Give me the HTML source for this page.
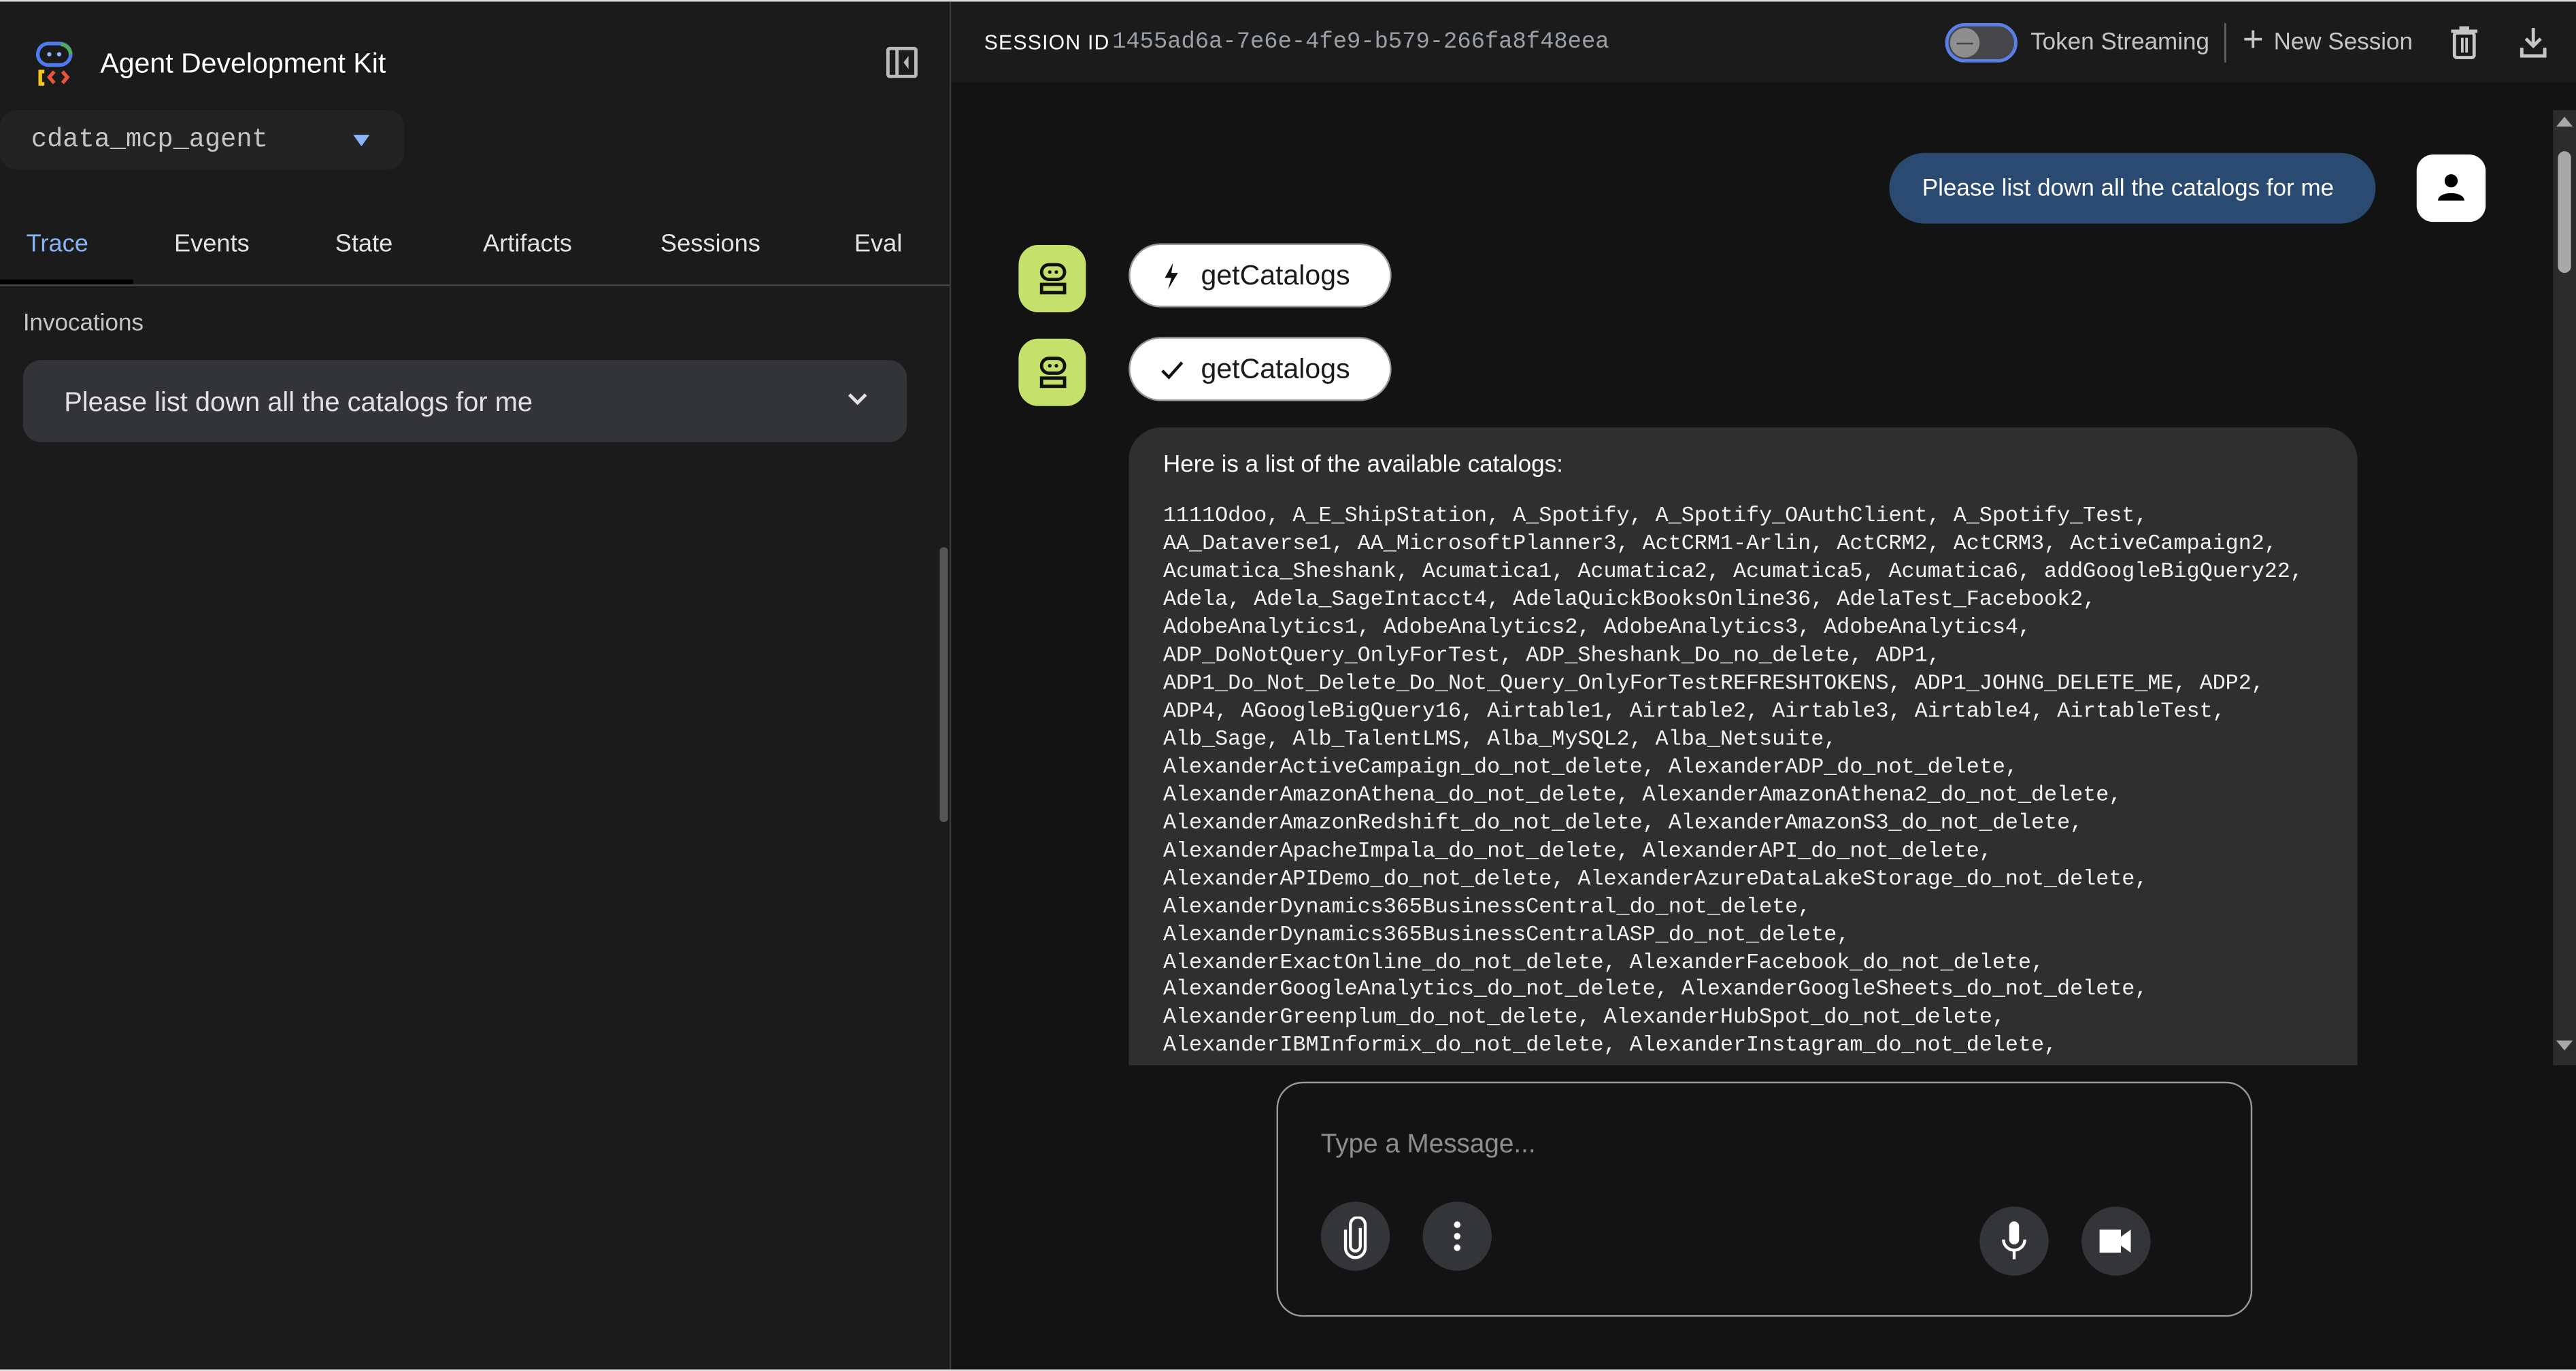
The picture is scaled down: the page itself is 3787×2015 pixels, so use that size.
<!DOCTYPE html>
<html><head><meta charset="utf-8"><style>
html,body{margin:0;padding:0;background:#131313;overflow:hidden;width:3787px;height:2015px}
#s{position:absolute;left:0;top:0;width:1568px;height:834px;transform:scale(2.41518,2.4161);transform-origin:0 0;font-family:"Liberation Sans",Arial,sans-serif;color:#e3e3e3}
.side{position:absolute;left:0;top:0;width:578px;height:834px;background:#1b1b1b;border-right:1px solid #3a3a3a}
.main{position:absolute;left:579px;top:0;width:989px;height:834px;background:#131313}
.hdr{position:absolute;left:0;top:0;width:989px;height:50px;background:#1b1b1b}
.abs{position:absolute}
.tab{position:absolute;top:140px;font-size:15px;color:#e3e3e3}
.mono{font-family:"Liberation Mono",monospace}
.avatar{position:absolute;left:41px;width:41px;height:41px;border-radius:12px;background:#c5e16b}
.pill{position:absolute;left:108px;width:160px;height:39px;border-radius:20px;background:#fff;border:1px solid #999;color:#1a1a1a;font-size:17px;box-sizing:border-box}
.btn{position:absolute;width:42px;height:42px;border-radius:50%;background:#343538}
pre{margin:0;font-family:"Liberation Mono",monospace;font-size:13.15px;line-height:16.97px;color:#f2f2f2}
</style></head><body><div id="s">
<div class="side">
 <svg class="abs" style="left:20px;top:25px" width="28" height="28" viewBox="0 0 28 28">
  <rect x="3" y="1.5" width="20" height="13" rx="6.5" fill="none" stroke="#4f7bf0" stroke-width="2.2"/>
  <path d="M17 2 A6.5 6.5 0 0 1 23 8" stroke="#4caf50" stroke-width="2.2" fill="none"/>
  <circle cx="10" cy="8" r="1.3" fill="#8ab4f8"/><circle cx="16" cy="8" r="1.3" fill="#8ab4f8"/>
  <path d="M7 18.5 H4.5 V26 H7" stroke="#f5c518" stroke-width="2.2" fill="none"/>
  <path d="M13 18.5 L10 22 L13 25.5" stroke="#e8533f" stroke-width="2.2" fill="none"/>
  <path d="M18 18.5 L21 22 L18 25.5" stroke="#e8533f" stroke-width="2.2" fill="none"/>
 </svg>
 <div class="abs" style="left:61px;top:29px;font-size:17px;color:#fff">Agent Development Kit</div>
 <svg class="abs" style="left:539px;top:28px" width="20" height="20" viewBox="0 0 20 20"><rect x="1.5" y="1.5" width="17" height="17" rx="1" fill="none" stroke="#bbb" stroke-width="2"/><line x1="7" y1="2" x2="7" y2="18" stroke="#bbb" stroke-width="2"/><path d="M14 6 L11 10 L14 14Z" fill="#bbb"/></svg>
 <div class="abs" style="left:0;top:67px;width:246px;height:36px;border-radius:10px;background:#232323"></div>
 <div class="abs mono" style="left:19px;top:76px;font-size:16px;color:#c4c7c5">cdata_mcp_agent</div>
 <div class="abs" style="left:215px;top:82px;width:0;height:0;border-left:5px solid transparent;border-right:5px solid transparent;border-top:7px solid #8ab4f8"></div>
 <div class="tab" style="left:16px;color:#8ab4f8">Trace</div>
 <div class="tab" style="left:106px">Events</div>
 <div class="tab" style="left:204px">State</div>
 <div class="tab" style="left:294px">Artifacts</div>
 <div class="tab" style="left:402px">Sessions</div>
 <div class="tab" style="left:520px">Eval</div>
 <div class="abs" style="left:0;top:170px;width:81px;height:3px;background:#000"></div>
 <div class="abs" style="left:0;top:173px;width:578px;height:1px;background:#444"></div>
 <div class="abs" style="left:14px;top:189px;font-size:14.5px;color:#c4c7c5">Invocations</div>
 <div class="abs" style="left:14px;top:219px;width:538px;height:50px;border-radius:11px;background:#333437"></div>
 <div class="abs" style="left:39px;top:236px;font-size:16.5px;color:#e3e3e3">Please list down all the catalogs for me</div>
 <svg class="abs" style="left:515px;top:238px" width="14" height="10" viewBox="0 0 14 10"><path d="M2 2 L7 7 L12 2" stroke="#e3e3e3" stroke-width="2" fill="none"/></svg>
 <div class="abs" style="left:572px;top:333px;width:5px;height:167px;background:#555;border-radius:2px"></div>
</div>
<div class="main">
 <div class="hdr">
  <div class="abs" style="left:20px;top:19px;font-size:12.5px;color:#fff;letter-spacing:.5px">SESSION ID</div>
  <div class="abs mono" style="left:98px;top:18px;font-size:14px;color:#9aa0a6">1455ad6a-7e6e-4fe9-b579-266fa8f48eea</div>
  <div class="abs" style="left:605px;top:14px;width:44px;height:24px;border-radius:13px;background:#46464a;border:2px solid #5b7fe8;box-sizing:border-box"></div>
  <div class="abs" style="left:608px;top:17px;width:18px;height:18px;border-radius:50%;background:#8e8e8e"></div>
  <div class="abs" style="left:612px;top:25.5px;width:10px;height:1.5px;background:#444"></div>
  <div class="abs" style="left:657px;top:18px;font-size:14.5px;color:#c4c7c5">Token Streaming</div>
  <div class="abs" style="left:775px;top:14px;width:1px;height:24px;background:#666"></div>
  <div class="abs" style="left:786px;top:11px;font-size:22px;color:#c4c7c5;font-weight:300">+</div>
  <div class="abs" style="left:805px;top:18px;font-size:14.5px;color:#c4c7c5">New Session</div>
  <svg class="abs" style="left:911px;top:15px" width="20" height="22" viewBox="0 0 20 22"><rect x="4" y="5" width="12" height="15" rx="1.5" fill="none" stroke="#c4c7c5" stroke-width="2"/><rect x="2" y="3" width="16" height="2" fill="#c4c7c5"/><rect x="7" y="1" width="6" height="2" fill="#c4c7c5"/><rect x="8" y="8" width="1.6" height="9" fill="#c4c7c5"/><rect x="10.6" y="8" width="1.6" height="9" fill="#c4c7c5"/></svg>
  <svg class="abs" style="left:953px;top:15px" width="20" height="22" viewBox="0 0 20 22"><path d="M10 2 V13 M5.5 8.5 L10 13 L14.5 8.5" stroke="#c4c7c5" stroke-width="2" fill="none"/><path d="M3 14 V19 H17 V14" stroke="#c4c7c5" stroke-width="2" fill="none"/></svg>
 </div>
 <div class="abs" style="left:571px;top:93px;width:296px;height:43px;border-radius:22px;background:#2a4a72"></div>
 <div class="abs" style="left:591px;top:107px;font-size:14.5px;color:#fff">Please list down all the catalogs for me</div>
 <div class="abs" style="left:892px;top:94px;width:42px;height:41px;border-radius:10px;background:#fff"></div>
 <svg class="abs" style="left:903px;top:104px" width="20" height="20" viewBox="0 0 20 20"><circle cx="10" cy="6" r="4" fill="#000"/><path d="M2 18 C2 12 18 12 18 18 Z" fill="#000"/></svg>

 <div class="avatar" style="top:149px"></div>
 <div class="avatar" style="top:206px"></div>
 <svg class="abs" style="left:51px;top:159px" width="22" height="22" viewBox="0 0 22 22"><rect x="4" y="2" width="14" height="9" rx="4.5" fill="none" stroke="#111" stroke-width="2"/><circle cx="9" cy="6.5" r="1.1" fill="#111"/><circle cx="13" cy="6.5" r="1.1" fill="#111"/><rect x="4" y="14" width="14" height="5" fill="none" stroke="#111" stroke-width="2"/></svg>
 <svg class="abs" style="left:51px;top:216px" width="22" height="22" viewBox="0 0 22 22"><rect x="4" y="2" width="14" height="9" rx="4.5" fill="none" stroke="#111" stroke-width="2"/><circle cx="9" cy="6.5" r="1.1" fill="#111"/><circle cx="13" cy="6.5" r="1.1" fill="#111"/><rect x="4" y="14" width="14" height="5" fill="none" stroke="#111" stroke-width="2"/></svg>
 <div class="pill" style="top:148px"><svg class="abs" style="left:19px;top:11px" width="12" height="16" viewBox="0 0 12 16"><path d="M7 0 L2 9 H6 L4 16 L10 6 H6 Z" fill="#111"/></svg><span class="abs" style="left:43px;top:9px">getCatalogs</span></div>
 <div class="pill" style="top:205px"><svg class="abs" style="left:18px;top:12px" width="15" height="14" viewBox="0 0 15 14"><path d="M1.5 7.5 L5.5 11.5 L13.5 2.5" stroke="#111" stroke-width="1.8" fill="none"/></svg><span class="abs" style="left:43px;top:9px">getCatalogs</span></div>

 <div class="abs" style="left:108px;top:260px;width:748px;height:388px;overflow:hidden">
  <div class="abs" style="left:0;top:0;width:748px;height:420px;background:#2f2f2f;border-radius:20px"></div>
  <div class="abs" style="left:21px;top:15px;font-size:14.5px;color:#fff">Here is a list of the available catalogs:</div>
  <pre class="abs" style="left:21px;top:46px">1111Odoo, A_E_ShipStation, A_Spotify, A_Spotify_OAuthClient, A_Spotify_Test,
AA_Dataverse1, AA_MicrosoftPlanner3, ActCRM1-Arlin, ActCRM2, ActCRM3, ActiveCampaign2,
Acumatica_Sheshank, Acumatica1, Acumatica2, Acumatica5, Acumatica6, addGoogleBigQuery22,
Adela, Adela_SageIntacct4, AdelaQuickBooksOnline36, AdelaTest_Facebook2,
AdobeAnalytics1, AdobeAnalytics2, AdobeAnalytics3, AdobeAnalytics4,
ADP_DoNotQuery_OnlyForTest, ADP_Sheshank_Do_no_delete, ADP1,
ADP1_Do_Not_Delete_Do_Not_Query_OnlyForTestREFRESHTOKENS, ADP1_JOHNG_DELETE_ME, ADP2,
ADP4, AGoogleBigQuery16, Airtable1, Airtable2, Airtable3, Airtable4, AirtableTest,
Alb_Sage, Alb_TalentLMS, Alba_MySQL2, Alba_Netsuite,
AlexanderActiveCampaign_do_not_delete, AlexanderADP_do_not_delete,
AlexanderAmazonAthena_do_not_delete, AlexanderAmazonAthena2_do_not_delete,
AlexanderAmazonRedshift_do_not_delete, AlexanderAmazonS3_do_not_delete,
AlexanderApacheImpala_do_not_delete, AlexanderAPI_do_not_delete,
AlexanderAPIDemo_do_not_delete, AlexanderAzureDataLakeStorage_do_not_delete,
AlexanderDynamics365BusinessCentral_do_not_delete,
AlexanderDynamics365BusinessCentralASP_do_not_delete,
AlexanderExactOnline_do_not_delete, AlexanderFacebook_do_not_delete,
AlexanderGoogleAnalytics_do_not_delete, AlexanderGoogleSheets_do_not_delete,
AlexanderGreenplum_do_not_delete, AlexanderHubSpot_do_not_delete,
AlexanderIBMInformix_do_not_delete, AlexanderInstagram_do_not_delete,</pre>
 </div>

 <div class="abs" style="left:975px;top:67px;width:14px;height:581px;background:#2c2c2c"></div>
 <div class="abs" style="left:978px;top:92px;width:8px;height:74px;border-radius:4px;background:#a8a8a8"></div>
 <div class="abs" style="left:977px;top:71px;width:0;height:0;border-left:5px solid transparent;border-right:5px solid transparent;border-bottom:6px solid #a8a8a8"></div>
 <div class="abs" style="left:977px;top:633px;width:0;height:0;border-left:5px solid transparent;border-right:5px solid transparent;border-top:6px solid #a8a8a8"></div>

 <div class="abs" style="left:198px;top:658px;width:594px;height:143px;border:1px solid #9a9a9a;border-radius:16px;box-sizing:border-box"></div>
 <div class="abs" style="left:225px;top:688px;font-size:16px;color:#8e8e8e">Type a Message...</div>
 <div class="btn" style="left:225px;top:731px"></div>
 <svg class="abs" style="left:237px;top:740px" width="18" height="26" viewBox="0 0 18 26"><path d="M12 7 V18 A3 3 0 0 1 6 18 V5 A4.5 4.5 0 0 1 15 5 V19 A6 6 0 0 1 3 19 V8" stroke="#fff" stroke-width="1.8" fill="none"/></svg>
 <div class="btn" style="left:287px;top:731px"></div>
 <div class="abs" style="left:306px;top:743px;width:4px;height:4px;border-radius:50%;background:#fff;box-shadow:0 7px 0 #fff,0 14px 0 #fff"></div>
 <div class="btn" style="left:626px;top:734px"></div>
 <svg class="abs" style="left:637px;top:742px" width="20" height="26" viewBox="0 0 20 26"><rect x="7" y="1" width="6" height="14" rx="3" fill="#fff"/><path d="M3.5 12 A6.5 6.5 0 0 0 16.5 12" stroke="#fff" stroke-width="1.8" fill="none"/><line x1="10" y1="18" x2="10" y2="24" stroke="#fff" stroke-width="1.8"/></svg>
 <div class="btn" style="left:688px;top:734px"></div>
 <svg class="abs" style="left:698px;top:745px" width="22" height="20" viewBox="0 0 22 20"><rect x="1" y="3" width="13" height="14" fill="#fff"/><path d="M13 8 L20 3 V17 L13 12Z" fill="#fff"/></svg>
</div>
<div class="abs" style="left:0;top:0;width:1568px;height:1px;background:#dcdcdc"></div>
<div class="abs" style="left:0;top:833px;width:1568px;height:1px;background:#dcdcdc"></div>
</div></body></html>
